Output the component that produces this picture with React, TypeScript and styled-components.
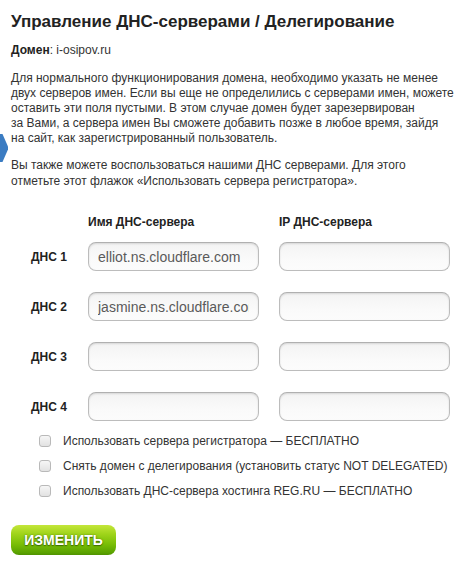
import React from "react";
import styled, { createGlobalStyle } from "styled-components";

const GlobalStyle = createGlobalStyle`
  html, body {
    margin: 0;
    padding: 0;
    background: #ffffff;
  }
  body {
    font-family: "Liberation Sans", Arial, sans-serif;
    color: #333333;
  }
  * { box-sizing: border-box; }
`;

const Page = styled.div`
  position: relative;
  width: 474px;
  min-height: 582px;
  padding: 11px 19px 0 11px;
  font-size: 12px;
`;

const Title = styled.h1`
  margin: 0;
  font-size: 17px;
  line-height: 22px;
  font-weight: bold;
  color: #222222;
`;

const DomainLine = styled.div`
  margin-top: 10px;
  line-height: 15px;
  color: #333333;
  b { color: #222222; }
`;

const Paragraph = styled.p<{ $lh: number; $mt: number }>`
  margin: ${(p) => p.$mt}px 0 0 0;
  line-height: ${(p) => p.$lh}px;
  color: #333333;
`;

const SideMarker = styled.svg`
  position: absolute;
  left: 0;
  top: 134px;
`;

const Table = styled.div`
  margin-top: 26px;
  padding-left: 20px;
  display: flex;
  flex-direction: column;
`;

const GridRow = styled.div`
  display: grid;
  grid-template-columns: 37px 171px 171px;
  column-gap: 20px;
  align-items: center;
`;

const HeaderRow = styled(GridRow)`
  margin-bottom: 12px;
`;

const HeaderCell = styled.div`
  font-weight: bold;
  line-height: 15px;
  color: #222222;
`;

const Rows = styled.div`
  display: flex;
  flex-direction: column;
  gap: 21px;
`;

const RowLabel = styled.div`
  font-weight: bold;
  color: #222222;
  white-space: nowrap;
`;

const TextInput = styled.input`
  width: 171px;
  height: 29px;
  padding: 0 9px;
  border: 1px solid #bcbcbc;
  border-top-color: #b0b0b0;
  border-radius: 8px;
  background: linear-gradient(to bottom, #f3f3f3 0%, #fafafa 60%, #fcfcfc 100%);
  box-shadow: inset 0 1px 2px rgba(0, 0, 0, 0.12);
  font-family: "Liberation Sans", Arial, sans-serif;
  font-size: 14px;
  color: #5a5a5a;
  outline: none;
`;

const Options = styled.div`
  margin-top: 7px;
  padding-left: 28px;
  display: flex;
  flex-direction: column;
`;

const OptionRow = styled.label`
  display: flex;
  align-items: center;
  height: 25px;
  gap: 12px;
  color: #333333;
`;

const Check = styled.input`
  appearance: none;
  -webkit-appearance: none;
  margin: 0;
  width: 12px;
  height: 12px;
  border: 1px solid #b9b9b9;
  border-radius: 3px;
  background: linear-gradient(to bottom, #f6f6f6 0%, #e2e2e2 100%);
`;

const SubmitButton = styled.button`
  margin-top: 22px;
  width: 105px;
  height: 30px;
  border: none;
  border-radius: 8px;
  background: linear-gradient(
    to bottom,
    #c4e63a 0%,
    #9fd41a 30%,
    #78bd06 65%,
    #5aa200 92%,
    #4f9200 100%
  );
  color: #ffffff;
  font-family: "Liberation Sans", Arial, sans-serif;
  font-weight: bold;
  font-size: 14px;
  text-shadow: 0 1px 1px #3e6d00, 0 0 2px rgba(40, 80, 0, 0.6);
  cursor: pointer;
  display: block;
`;

const rows = [
  { label: "ДНС 1", name: "elliot.ns.cloudflare.com" },
  { label: "ДНС 2", name: "jasmine.ns.cloudflare.com" },
  { label: "ДНС 3", name: "" },
  { label: "ДНС 4", name: "" },
];

const options = [
  "Использовать сервера регистратора — БЕСПЛАТНО",
  "Снять домен с делегирования (установить статус NOT DELEGATED)",
  "Использовать ДНС-сервера хостинга REG.RU — БЕСПЛАТНО",
];

const introText =
  "Для нормального функционирования домена, необходимо указать не менее двух серверов имен. " +
  "Если вы еще не определились с серверами имен, можете оставить эти поля пустыми. " +
  "В этом случае домен будет зарезервирован за\u00a0Вами, а сервера имен Вы сможете добавить " +
  "позже в любое время, зайдя на\u00a0сайт, как зарегистрированный пользователь.";

const hintText =
  "Вы также можете воспользоваться нашими ДНС серверами. Для этого отметьте этот флажок " +
  "«Использовать сервера регистратора».";

export default function App() {
  return (
    <>
      <GlobalStyle />
      <Page>
        <Title>Управление ДНС-серверами / Делегирование</Title>
        <DomainLine>
          <b>Домен</b>: i-osipov.ru
        </DomainLine>
        <Paragraph $lh={15} $mt={13}>
          {introText}
        </Paragraph>
        <SideMarker width="8" height="28" viewBox="0 0 8 28">
          <polygon points="0,0 2.5,0 8,12.5 8,15.5 2.5,28 0,28" fill="#3b7cc2" />
        </SideMarker>
        <Paragraph $lh={16} $mt={11}>
          {hintText}
        </Paragraph>
        <Table>
          <HeaderRow>
            <span />
            <HeaderCell>Имя ДНС-сервера</HeaderCell>
            <HeaderCell>IP ДНС-сервера</HeaderCell>
          </HeaderRow>
          <Rows>
            {rows.map((r) => (
              <GridRow key={r.label}>
                <RowLabel>{r.label}</RowLabel>
                <TextInput type="text" defaultValue={r.name} />
                <TextInput type="text" defaultValue="" />
              </GridRow>
            ))}
          </Rows>
        </Table>
        <Options>
          {options.map((o) => (
            <OptionRow key={o}>
              <Check type="checkbox" />
              <span>{o}</span>
            </OptionRow>
          ))}
        </Options>
        <SubmitButton type="button">ИЗМЕНИТЬ</SubmitButton>
      </Page>
    </>
  );
}
